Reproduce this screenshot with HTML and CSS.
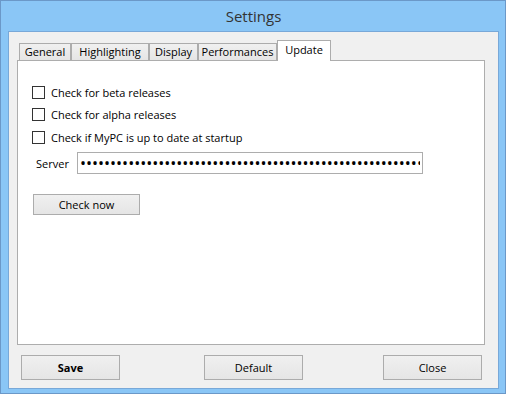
FILE: index.html
```html
<!DOCTYPE html>
<html lang="en">

<head>
    <meta charset="UTF-8">
    <title>Settings</title>
    <link rel="stylesheet" href="styles.css">
</head>

<body>
    <div class="window">
        <div class="titlebar">Settings</div>

        <div class="client">
            <div class="tabs">
                <div class="tab tab-general">General</div>
                <div class="tab tab-highlight">Highlighting</div>
                <div class="tab tab-display">Display</div>
                <div class="tab tab-perf">Performances</div>
                <div class="tab tab-update active">Update</div>
            </div>

            <div class="panel">
                <label class="check-row"><span class="checkbox"></span>Check for beta releases</label>
                <label class="check-row"><span class="checkbox"></span>Check for alpha releases</label>
                <label class="check-row"><span class="checkbox"></span>Check if MyPC is up to date at startup</label>

                <div class="server-row">
                    <span class="server-label">Server</span>
                    <input type="password" class="server-input" value="abcdefghijklmnopqrstuvwxyzabcdefghijklmnopqrstuvwxyzabcdefghij">
                </div>

                <button class="btn btn-check">Check now</button>
            </div>

            <div class="footer">
                <button class="btn btn-footer btn-save">Save</button>
                <button class="btn btn-footer btn-default">Default</button>
                <button class="btn btn-footer">Close</button>
            </div>
        </div>
    </div>
</body>

</html>
```

FILE: styles.css
```css
* {
    box-sizing: border-box;
}

body {
    margin: 0;
    font-family: "Open Sans", "Noto Sans", sans-serif;
    font-size: 11px;
    color: #000;
}

.window {
    width: 506px;
    height: 394px;
    background: #8ac6f6;
    border: 1px solid #6b98c8;
    padding: 0 6px 4px 7px;
    display: flex;
    flex-direction: column;
}

.titlebar {
    height: 30px;
    line-height: 30px;
    text-align: center;
    font-size: 15px;
    color: #333;
}

.client {
    flex: 1;
    background: #f0f0f0;
    border: 1px solid #78a8d8;
    padding: 8px 13px 0 8px;
}

/* tabs */
.tabs {
    display: flex;
    align-items: flex-end;
    height: 20px;
    padding-left: 2px;
}

.tab {
    height: 17px;
    line-height: 16px;
    text-align: center;
    background: linear-gradient(#f0f0f0, #e5e5e5);
    border: 1px solid #acacac;
    border-bottom: none;
    white-space: nowrap;
}

.tab-general { width: 52px; }
.tab-highlight { width: 78px; }
.tab-display { width: 49px; }
.tab-perf { width: 79px; }

.tab.active {
    width: 54px;
    height: 21px;
    line-height: 18px;
    background: #fff;
    margin-bottom: -1px;
    position: relative;
    z-index: 1;
}

.panel {
    height: 285px;
    background: #fff;
    border: 1px solid #adadad;
    padding: 20px 14px 0 14px;
}

.check-row {
    display: flex;
    align-items: center;
    height: 22.5px;
}

.checkbox {
    width: 13px;
    height: 13px;
    border: 1px solid #333;
    background: #fff;
    margin-right: 6px;
}

.server-row {
    display: flex;
    align-items: center;
    margin-top: 3.5px;
    padding-left: 4px;
}

.server-label {
    width: 41px;
}

.server-input {
    width: 346px;
    height: 22px;
    border: 1px solid #adadad;
    padding: 0 2px;
    font-family: "Open Sans", sans-serif;
    font-size: 16px;
    letter-spacing: 0;
    color: #000;
    outline: none;
}

.btn {
    font-family: "Open Sans", "Noto Sans", sans-serif;
    font-size: 11px;
    color: #000;
    background: linear-gradient(#f0f0f0, #e5e5e5);
    border: 1px solid #acacac;
    padding: 0;
}

.btn-check {
    display: block;
    width: 107px;
    height: 21px;
    margin: 20px 0 0 1px;
}

.footer {
    display: flex;
    justify-content: space-between;
    margin: 10px -13px 0 -8px;
    padding: 0 16px 0 12px;
}

.btn-footer {
    width: 99px;
    height: 25px;
}

.btn-default {
    margin-left: 4px;
}

.btn-save {
    font-weight: bold;
}
```
